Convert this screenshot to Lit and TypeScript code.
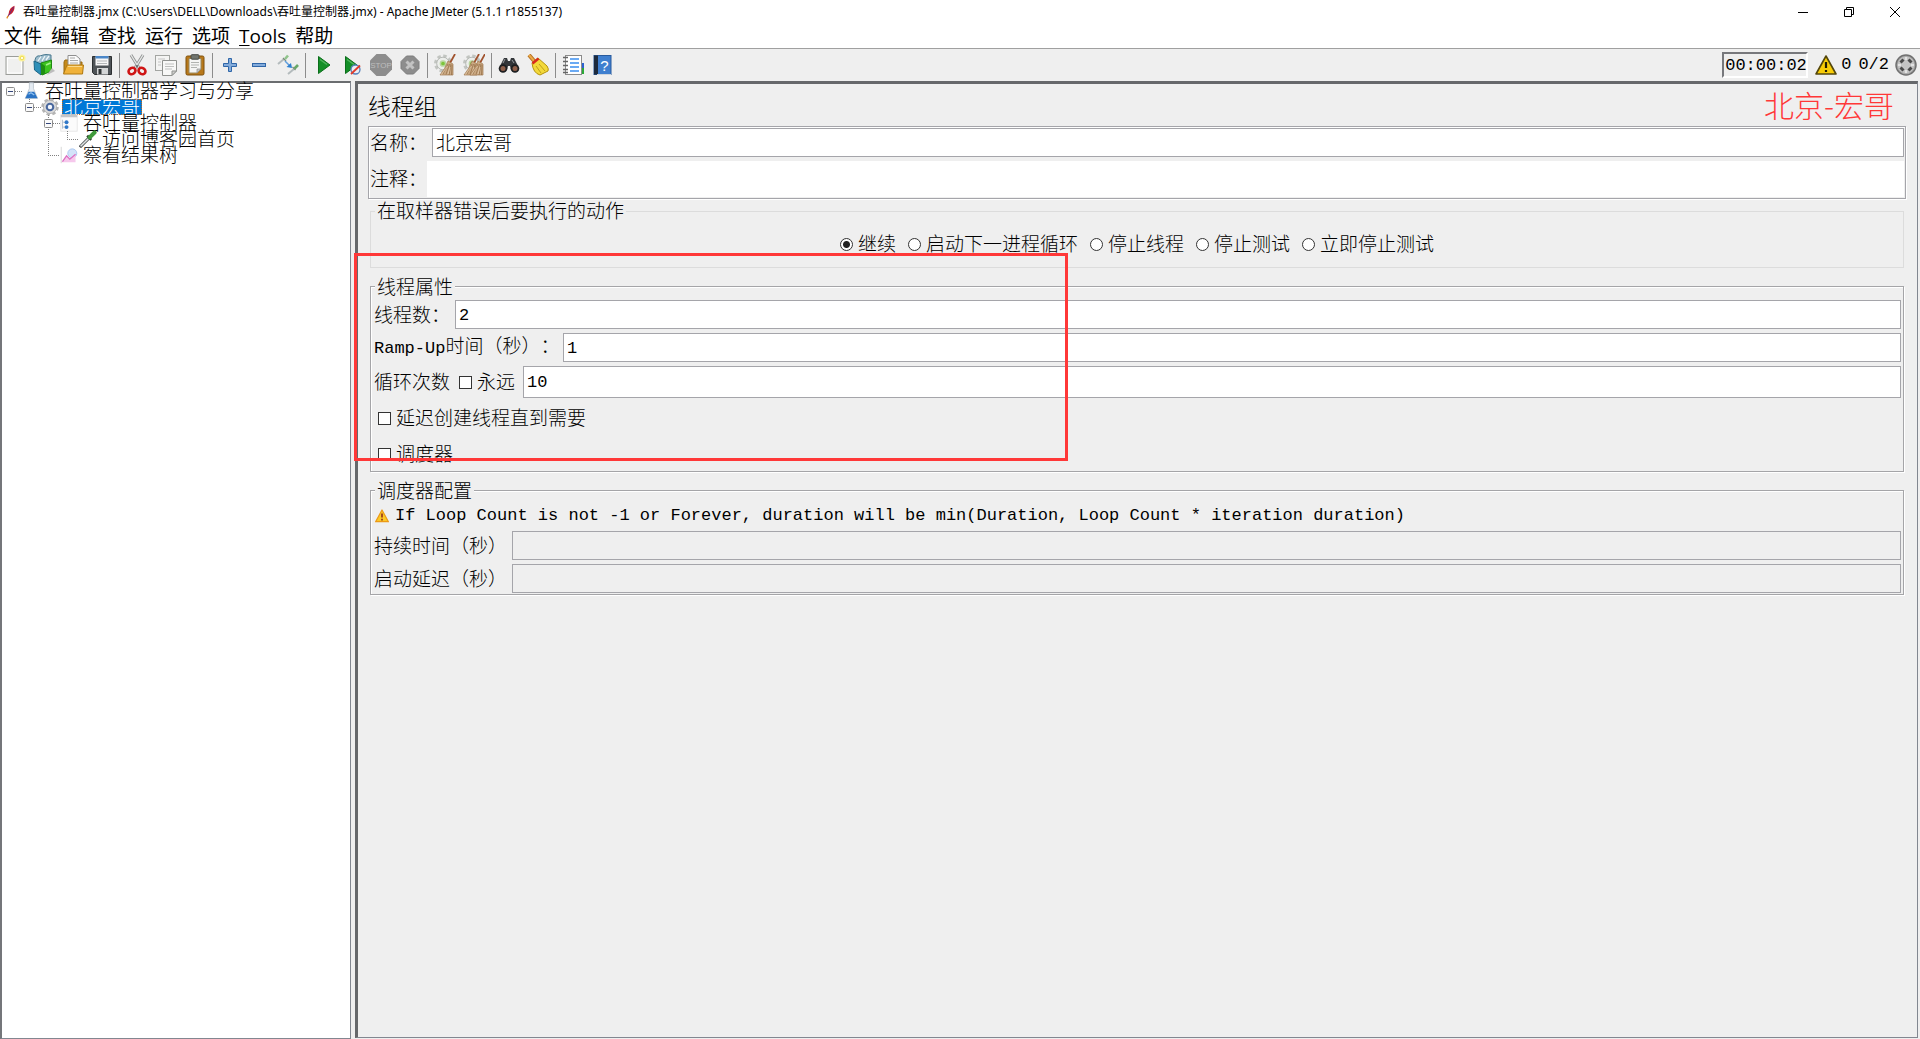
import { LitElement, html, svg, css, nothing } from "lit";
import type { TemplateResult } from "lit";
import { customElement } from "lit/decorators.js";
import { classMap } from "lit/directives/class-map.js";

const gear = svg`
  <circle cx="9" cy="9.500" r="7.500" fill="none" stroke="#c2c5c1" stroke-width="3" stroke-dasharray="3.400 2.490"/>
  <circle cx="9" cy="9.500" r="6.300" fill="#eceeeb" stroke="#b6b9b5"/>
  <circle cx="9" cy="9.500" r="2.600" fill="#7cc53a" stroke="#b9d79e" stroke-width="1.500"/>`;

const broom = (x: number) => svg`
  <g transform="translate(${x} 0)">
    <path d="M15 9 20 0" stroke="#a0522d" stroke-width="1.800"/>
    <path d="M13 7 18 10 18 21 5 21Q10 15 13 7Z" fill="#cba983" stroke="#a07a50" stroke-width=".700"/>
    <path d="M13 10 8 20M14.500 10 11 20.500M16 10 14 21M17 11 16.500 21" stroke="#8f6a42" stroke-width=".700"/>
    <path d="M12.500 12 6.500 20.500M15 13 13 20" stroke="#e7d0b2" stroke-width=".700"/>
  </g>`;

const icons: Record<string, TemplateResult> = {
  new: svg`
    <rect x="2" y="2.500" width="17" height="18" fill="#f0f0ef" stroke="#9c9e9a"/>
    <rect x="3.500" y="4" width="14" height="15" fill="none" stroke="#fff"/>
    <circle cx="18" cy="4" r="3.600" fill="#fbf3a0"/><circle cx="18" cy="4" r="1.800" fill="#fffbe0" stroke="#eedb4c"/>`,
  templates: svg`
    <path d="M2 6Q3 1 7 2L10 1Q12 0 18 1L18 8 3 10Z" fill="#9dbccc" stroke="#48788f"/>
    <path d="M5 7 8 2.500M9 7 12 2M13 6 16 2" stroke="#eef6f9" stroke-width="1.300"/>
    <path d="M1 7 8 10 8 21 1.500 16Z" fill="#2e8fb8" stroke="#1b6587"/>
    <path d="M8 9 18.500 6 18.500 17 9 21Z" fill="#3cc41f" stroke="#1e8a10"/>
    <path d="M8 9 12 12 12 20 8 21Z" fill="#1f8f12"/><path d="M13 11 17.500 9" stroke="#a5f08c" stroke-width="1.500"/>
    <path d="M19 14 22 17 14 21Z" fill="#bdbdbd"/>`,
  open: svg`
    <path d="M2 8 3 6 7 6 8 8 20 8 20 19 2 19Z" fill="#c58a1a" stroke="#9a6b10"/>
    <path d="M6 1.500 14 1.500 18 5 18 13 6 13Z" fill="#fafafa" stroke="#8f8f8f"/>
    <path d="M8 4 13 4M8 6.500 16 6.500M8 9 16 9" stroke="#a8a8a8"/>
    <path d="M5 11 21.500 11 20.500 20 1.500 20Z" fill="#f0b23a" stroke="#b07a12"/>
    <path d="M6 12.500 20 12.500" stroke="#fbd98c"/>`,
  save: svg`
    <path d="M1.500 2.500 20.500 2.500 20.500 20.500 3.500 20.500 1.500 18.500Z" fill="#4e5357" stroke="#2c2f31"/>
    <rect x="4.500" y="2.500" width="13" height="9" fill="#f6f6f6"/><rect x="4.500" y="2" width="13" height="2.500" fill="#4b87c8"/>
    <path d="M6 7 16 7M6 9.500 16 9.500" stroke="#b4b7b9"/>
    <rect x="6" y="14" width="11" height="6.500" fill="#d4d6d7"/><rect x="7.500" y="15" width="3" height="5" fill="#303436"/>`,
  cut: svg`
    <path d="M5 1 13 14M17 1 9 14" stroke="#8e9090" stroke-width="3"/>
    <path d="M5 1 13 14M17 1 9 14" stroke="#e5e7e6" stroke-width="1.400"/>
    <ellipse cx="6" cy="17" rx="3.600" ry="3" fill="none" stroke="#cf1515" stroke-width="2.600" transform="rotate(-30 6 17)"/>
    <ellipse cx="16" cy="17" rx="3.600" ry="3" fill="none" stroke="#cf1515" stroke-width="2.600" transform="rotate(30 16 17)"/>
    <circle cx="11" cy="12" r="1" fill="#555"/>`,
  copy: svg`
    <rect x=".500" y="1.500" width="14" height="15" fill="#f4f4f3" stroke="#a3a5a2"/>
    <path d="M3 5 10 5M3 8 6 8M3 11 6 11" stroke="#c4c4c4"/>
    <path d="M7.500 6.500 21.500 6.500 21.500 17 17 21.500 7.500 21.500Z" fill="#f8f8f7" stroke="#90928f"/>
    <path d="M10 10 19 10M10 12.500 19 12.500M10 15 17 15" stroke="#bfc0bf"/>
    <path d="M21.500 17 17 17 17 21.500Z" fill="#cfcfcd" stroke="#90928f"/>`,
  paste: svg`
    <rect x="2" y="2" width="18" height="19" rx="1.500" fill="#b8781a" stroke="#7e500c"/>
    <path d="M5 4.500 17 4.500 17 15 13 19 5 19Z" fill="#f5f5f4" stroke="#98885e"/>
    <rect x="7" y=".700" width="8" height="4.500" rx="1" fill="#72766f" stroke="#484b46"/>
    <path d="M7 8.500 15 8.500M7 11 15 11M7 13.500 13 13.500" stroke="#b1b3b0"/>
    <path d="M17 15 13 15 13 19Z" fill="#c7c8c6" stroke="#8f8f8f" stroke-width=".700"/>`,
  plus: svg`<path d="M9.500 4.500H12.500V9.500H17.500V12.500H12.500V17.500H9.500V12.500H4.500V9.500H9.500Z" fill="#83abdb" stroke="#2f66a8"/>`,
  minus: svg`<rect x="4.500" y="9.500" width="13" height="3" fill="#83abdb" stroke="#2f66a8"/>`,
  toggle: svg`
    <path d="M1 10 7 5" stroke="#b4bbbd" stroke-width="2"/><path d="M6 4 9 7" stroke="#7b8a7b" stroke-width="1.300"/><path d="M8 5 11 1.500" stroke="#8fc48b" stroke-width="2.600"/>
    <path d="M8 7 13 12" stroke="#5f9ede" stroke-width="1.500"/><path d="M14 9 15 14 9.500 13Z" fill="#2e7fd0"/>
    <path d="M11 20 17 15" stroke="#b4bbbd" stroke-width="2"/><path d="M15.500 13 18.500 16" stroke="#7b8a7b" stroke-width="1.300"/><path d="M17.500 14.500 21 11" stroke="#69a869" stroke-width="2.600"/>`,
  start: svg`<path d="M6.500 2.500 18 11 6.500 19.500Z" fill="#138f27" stroke="#0b6e1a"/><path d="M8 5.500 15 10.500" stroke="#4fb35c" stroke-width="1.500"/>`,
  startNoPause: svg`
    <path d="M4.500 2.500 16 11 4.500 19.500Z" fill="#138f27" stroke="#0b6e1a"/><path d="M6 5.500 13 10.500" stroke="#4fb35c" stroke-width="1.500"/>
    <circle cx="14.500" cy="15.500" r="4.500" fill="#e9eef5" stroke="#5580bb" stroke-width="1.300"/><path d="M10 20 19 11.500" stroke="#e03a2a" stroke-width="1.800"/>`,
  stop: svg`
    <path d="M6.500 0H15.500L22 6.500V15.500L15.500 22H6.500L0 15.500V6.500Z" fill="#8d8d8d"/>
    <text x="11" y="14" text-anchor="middle" font-family="Liberation Sans" font-size="8" fill="#bdbdbd">STOP</text>`,
  shutdown: svg`
    <path d="M7.500 2H14.500L20 7.500V14.500L14.500 20H7.500L2 14.500V7.500Z" fill="#8d8d8d" stroke="#7e7e7e"/>
    <path d="M7.500 7.500 14.500 14.500M14.500 7.500 7.500 14.500" stroke="#c3c3c3" stroke-width="3"/>`,
  clear: svg`${gear}${broom(1)}`,
  clearAll: svg`${gear}${broom(-4)}${broom(2)}`,
  search: svg`
    <path d="M2 12 6 4H9L10 7H12L13 4H16L20 12V16H13L12 12H10L9 16H2Z" fill="#33363a"/>
    <circle cx="5" cy="14.500" r="4.300" fill="#1d1f21"/><circle cx="17" cy="14.500" r="4.300" fill="#1d1f21"/>
    <circle cx="5" cy="14.500" r="2.500" fill="#8e5f4a"/><circle cx="17" cy="14.500" r="2.500" fill="#8e5f4a"/>
    <path d="M5 9 7 5M14 6 16 9" stroke="#999da1"/>`,
  resetSearch: svg`
    <path d="M2 1 8 8" stroke="#b3701f" stroke-width="4"/><path d="M2 1 8 8" stroke="#eca948" stroke-width="2"/>
    <path d="M5 9 11 4 20 12Q22 15 21 17L13 21Q6 19 5 9Z" fill="#f3d93a" stroke="#b5920d"/>
    <path d="M5.500 9.500 11.500 4.500" stroke="#d82a1d" stroke-width="2.500"/>
    <path d="M9 12 14 19M12 10 18 17" stroke="#c0a01a"/>`,
  functions: svg`
    <rect x="18" y="14" width="4" height="6" fill="#2aa836"/><rect x="18" y="9" width="4" height="5" fill="#2b62d0"/>
    <rect x="3.500" y="1.500" width="16" height="19" fill="#fff" stroke="#8b8b8b"/>
    <path d="M8 5H17M8 9H17M8 13H17M8 17H17" stroke="#3b8ff0" stroke-width="1.500"/>
    <path d="M1 3.500H6M1 7.500H6M1 11.500H6M1 15.500H6M1 18.500H6" stroke="#666" stroke-width="1.300"/>`,
  help: svg`
    <rect x="3" y="1.500" width="17" height="19" fill="#3f7fcf" stroke="#285a9c"/><rect x="3" y="1.500" width="4" height="19" fill="#1d2a3c"/>
    <path d="M6 20.500H20" stroke="#cfd5dc"/>
    <text x="13.500" y="16.500" text-anchor="middle" font-family="Liberation Sans" font-size="15" fill="#fff">?</text>`,
  threads: svg`
    <circle cx="11" cy="11" r="10" fill="#a9a9a9" stroke="#707070" stroke-width="1.500"/>
    <circle cx="11" cy="11" r="8.200" fill="#c4c4c4"/>
    <g stroke="#4a4a4a" stroke-width="3"><path d="M8.500 5.500 5.500 8.500M13.500 5.500 16.500 8.500M8.500 16.500 5.500 13.500M13.500 16.500 16.500 13.500"/></g>
    <path d="M11 3V6M11 16V19M3 11H6M16 11H19" stroke="#ececec" stroke-width="1.500"/>`,
  warning: svg`
    <path d="M11 2 21 20H1Z" fill="#f8cc06" stroke="#54470c" stroke-width="1.600" stroke-linejoin="round"/>
    <path d="M11 8V14M11 16V18" stroke="#231d02" stroke-width="2.200"/>`,
  caution: svg`
    <path d="M11 1.500 21 20H1Z" fill="#fbc926" stroke="#ec9a16" stroke-width="2" stroke-linejoin="round"/>
    <path d="M11 7V13.500M11 15.500V18" stroke="#a3461d" stroke-width="3"/>`,
  flask: svg`
    <path d="M9 1H14V8L19 20H4L9 8Z" fill="#e4ebf2" stroke="#b9c3cc"/>
    <path d="M8 12H15L19 20H4Z" fill="#2a73c4"/><path d="M8 15 11 13 15 16" stroke="#8fc0f0" stroke-width="1.500" fill="none"/>`,
  group: svg`
    <circle cx="11" cy="11" r="9.200" fill="none" stroke="#b4b4b4" stroke-width="3" stroke-dasharray="4.200 3.020"/>
    <circle cx="11" cy="11" r="8" fill="#dcdcdc" stroke="#a9a9a9"/>
    <circle cx="11" cy="11" r="4" fill="#f4f7fc" stroke="#4a689e" stroke-width="2.600"/>`,
  controller: svg`
    <rect x="1" y="1" width="20" height="20" fill="#fbfbfb" stroke="#e2e2e2"/><rect x="1" y="1" width="20" height="3" fill="#c3c5c9"/>
    <path d="M3 7V18M3 10H6M3 16H6" stroke="#a8b8c8"/>
    <circle cx="8" cy="10" r="2.400" fill="#2f78c8"/><circle cx="8" cy="16" r="2.400" fill="#2f78c8"/>`,
  sampler: svg`
    <path d="M1 21 12 10" stroke="#5c6062" stroke-width="4"/><path d="M2 20 12 10" stroke="#dfe4e4" stroke-width="1.700"/>
    <path d="M10 7 15 12" stroke="#2c3a2c" stroke-width="3"/><path d="M13 9 19 3" stroke="#3f9a3c" stroke-width="5" stroke-linecap="round"/>`,
  results: svg`
    <path d="M1.500 1V21" stroke="#d0d0d0"/>
    <circle cx="15" cy="9" r="5.500" fill="#d3e3f9" stroke="#a3c2ec"/>
    <path d="M2 20 8 12 12 16 19 10 19 20Z" fill="#f6c8ec"/><path d="M3 19 8 12 12 16 19 10" fill="none" stroke="#dc70c2" stroke-width="1.500"/>`,
  app: svg`
    <path d="M7 20 9 13Q10 4 18 1Q19 9 13 14L9 16Z" fill="#c8202e"/><path d="M8 18 17 3" stroke="#6d2a7c" stroke-width="1.500"/>
    <path d="M6 21 8 17" stroke="#e08a1e" stroke-width="2"/>`,
};

const icon = (name: string, size: number) =>
  html`<svg class="icon" width=${size} height=${size} viewBox="0 0 22 22" fill="none" aria-hidden="true">${icons[name]}</svg>`;

const toolGroups: [string, string][][] = [
  [["new", "新建"], ["templates", "模板"], ["open", "打开"], ["save", "保存"]],
  [["cut", "剪切"], ["copy", "复制"], ["paste", "粘贴"]],
  [["plus", "全部展开"], ["minus", "全部折叠"], ["toggle", "切换"]],
  [["start", "启动"], ["startNoPause", "不停顿开始"], ["stop", "停止"], ["shutdown", "关闭"]],
  [["clear", "清除"], ["clearAll", "清除全部"]],
  [["search", "查找"], ["resetSearch", "重置搜索"]],
  [["functions", "函数助手"], ["help", "帮助"]],
];

interface Node {
  label: string;
  icon: string;
  depth: number;
  selected?: boolean;
  box?: number;
  lines: string;
}

/* "lines" holds the dotted connectors of a row, "box" the centre of its expander. */
const nodes: Node[] = [
  { label: "吞吐量控制器学习与分享", icon: "flask", depth: 0, box: 8, lines: "M13 8.5H20" },
  { label: "北京宏哥", icon: "group", depth: 1, selected: true, box: 27, lines: "M27.5 0V4M32 8.5H39" },
  { label: "吞吐量控制器", icon: "controller", depth: 2, box: 46, lines: "M46.5 0V16M51 8.5H58" },
  { label: "访问博客园首页", icon: "sampler", depth: 3, lines: "M46.5 0V16M65.5 0V8M65 8.5H77" },
  { label: "察看结果树", icon: "results", depth: 2, lines: "M46.5 0V8M46 8.5H58" },
];

@customElement("app-root")
export class AppRoot extends LitElement {
  static styles = css`
    :host {
      display: block;
      color: #000;
      font: 300 19px/20px "Noto Sans CJK SC", "Liberation Sans", sans-serif;
      text-spacing-trim: space-all;
    }
    * { box-sizing: border-box; }
    button, input { font: inherit; color: inherit; }
    button { border: 0; padding: 0; background: none; display: flex; align-items: center; justify-content: center; }
    .icon { display: block; flex: none; }
    .window { height: 100vh; display: grid; grid-template-rows: 23px 26px 32px 1fr; background: #efefef; position: relative; }

    .title { display: flex; align-items: center; background: #fff; padding: 0 2px 0 3px; }
    .title h1 { margin: 0; padding-left: 6px; flex: 1; font: 400 12px/22px "Noto Sans", "Noto Sans CJK SC", sans-serif; }
    .title button { width: 46px; height: 20px; }

    .menu { display: flex; gap: 9px; padding: 1px 0 0 4px; background: #fff; border-bottom: 1px solid #a0a0a0; font: 400 19px/24px "Open Sans", "Noto Sans CJK SC", sans-serif; }
    .menu u { text-underline-offset: 2px; text-decoration-thickness: 1px; }

    .tools { display: flex; align-items: center; }
    .tools button { width: 29px; height: 28px; }
    .sep { width: 1px; height: 25px; margin: 0 2px 0 3px; background: #8c8c8c; }
    .mono { font: 400 17px/20px "Liberation Mono", monospace; }
    .status { margin-left: auto; display: flex; align-items: center; padding-right: 3px; }
    .clock { padding: 1px 0 0 1px; height: 26px; width: 86px; line-height: 22px; border: 2px solid; border-color: #77787c #fff #fff #77787c; }
    .status .alerts { width: auto; gap: 4px; margin: 0 7px 0 7px; }
    .status .threads { width: 22px; margin-left: 6px; }

    .main { display: grid; grid-template-columns: 351px 1fr; column-gap: 4px; min-height: 0; padding-right: 2px; }
    .tree { margin: 0; padding: 0; list-style: none; background: #fff; border: 1px solid #828790; border-width: 2px 1px 1px 2px; border-color: #6b6d70 #828790 #828790 #74767a; }
    .row { display: flex; height: 16px; align-items: center; white-space: nowrap; }
    .label { margin-left: 3px; padding: 0 2px; line-height: 14px; height: 16px; }
    .label.selected { background: #0078d7; color: #fff; outline: 1px dotted #c06a20; outline-offset: -1px; }

    .panel { border: solid #66686b; border-width: 3px 1px 1px 3px; border-right-color: #828790; border-bottom-color: #828790; margin-bottom: 1px; padding: 0 11px 0 10px; min-width: 0; }
    .heading { display: flex; align-items: center; justify-content: space-between; height: 42px; padding-right: 12px; }
    .heading h2 { margin: 0; font-size: 23px; line-height: 28px; font-weight: 300; }
    .stamp { font-size: 30px; line-height: 32px; color: #ff3838; padding-bottom: 2px; }

    .identity { border: 1px solid #a5a5aa; padding: 1px; background: #efefef; box-shadow: inset 1px 1px #fff, 1px 1px #fff; }
    .field { display: flex; align-items: center; min-height: 29px; }
    .field label { flex: none; }
    .field label, .choice { padding-bottom: 2px; }
    .field input[type="text"] { flex: 1; min-width: 0; align-self: stretch; border: 1px solid #a5a5aa; border-radius: 0; background: #fff; padding: 0 3px 2px; margin: 0; outline: none; }
    .field input.mono { padding: 2px 3px 0; }
    .field input:disabled { background: #efefef; }
    .identity label { width: 57px; }
    .identity input[type="text"].name { margin-left: 5px; }
    .identity input[type="text"].comment { border: 0; }
    .remarks { min-height: 36px; margin-top: 4px; }

    fieldset { border: 1px solid #a5a5a8; box-shadow: inset 1px 1px #fff, 1px 1px #fff; margin: 8px 2px 0 2px; padding: 4px 2px 1px 3px; display: grid; gap: 4px; min-width: 0; }
    legend { padding: 0 2px; margin-left: 1px; line-height: 20px; background: #efefef; }
    .errors { border-color: #dcdcdc; box-shadow: none; margin-top: 2px; padding: 13px 0; }
    .errors legend { margin-left: 4px; padding-bottom: 2px; line-height: 18px; }
    .choices { display: flex; justify-content: center; gap: 12px; line-height: 18px; }
    .choice { display: flex; align-items: center; gap: 5px; }
    .properties .check { padding-left: 4px; min-height: 32px; }
    .tall { min-height: 32px; }
    .colon { width: 81px; }
    .ramp { width: 189px; }
    .loops { width: 85px; }
    .forever { width: 64px; }
    .seconds { width: 138px; }
    .notice { display: flex; align-items: center; gap: 6px; height: 23px; padding-left: 1px; }

    .mark { appearance: none; width: 13px; height: 13px; margin: 2px 0 0; border: 1px solid #333; background: #fff; flex: none; }
    .mark[type="radio"] { border-radius: 50%; }
    .mark[type="radio"]:checked { background: radial-gradient(circle, #222 0 3px, #fff 4px); }

    .frame { position: absolute; left: 354px; top: 253px; width: 714px; height: 208px; border: 3px solid #ff3838; pointer-events: none; }
  `;

  private treeRow(node: Node) {
    const width = 20 + node.depth * 19;
    return html`<li class="row" role="treeitem" aria-level=${node.depth + 1} aria-selected=${node.selected ? "true" : "false"}>
      <svg class="icon" width=${width} height="16" fill="none" aria-hidden="true">
        <path d=${node.lines} stroke="#808080" stroke-dasharray="1 1" />
        ${node.box === undefined
          ? nothing
          : svg`<rect x=${node.box - 3.5} y="4.5" width="8" height="8" rx="1" fill="#fafafa" stroke="#8c8c8c"/>
              <path d="M${node.box - 2} 8.5h5" stroke="#34477c"/>`}
      </svg>
      ${icon(node.icon, 18)}
      <span class=${classMap({ label: true, selected: !!node.selected })}>${node.label}</span>
    </li>`;
  }

  render() {
    return html`<div class="window">
      <header class="title">
        ${icon("app", 14)}
        <h1>吞吐量控制器.jmx (C:\\Users\\DELL\\Downloads\\吞吐量控制器.jmx) - Apache JMeter (5.1.1 r1855137)</h1>
        <button aria-label="最小化"><svg width="12" height="12"><path d="M1 6.5H11" stroke="#000" /></svg></button>
        <button aria-label="还原"><svg width="12" height="12" fill="none" stroke="#000"><path d="M1.5 3.500H8.500V10.500H1.500ZM3.500 3V1.500H10.500V8.500H9" /></svg></button>
        <button aria-label="关闭"><svg width="12" height="12"><path d="M1 1 11 11M11 1 1 11" stroke="#000" /></svg></button>
      </header>
      <nav class="menu">
        ${["文件", "编辑", "查找", "运行", "选项"].map((m) => html`<button>${m}</button>`)}
        <button><span><u>T</u>ools</span></button>
        <button>帮助</button>
      </nav>
      <div class="tools" role="toolbar">
        ${toolGroups.map(
          (group, i) => html`${i ? html`<span class="sep"></span>` : nothing}
          ${group.map(([name, label]) => html`<button aria-label=${label}>${icon(name, 22)}</button>`)}`
        )}
        <div class="status mono">
          <span class="clock">00:00:02</span>
          <button class="alerts" aria-label="警告">${icon("warning", 22)}<span>0</span></button>
          <span>0/2</span>
          <button class="threads" aria-label="线程">${icon("threads", 22)}</button>
        </div>
      </div>
      <div class="main">
        <ul class="tree" role="tree">${nodes.map((n) => this.treeRow(n))}</ul>
        <main class="panel">
          <div class="heading"><h2>线程组</h2><span class="stamp">北京-宏哥</span></div>
          <div class="identity">
            <div class="field"><label for="name">名称：</label><input class="name" id="name" type="text" .value=${"北京宏哥"} /></div>
            <div class="field remarks"><label for="comment">注释：</label><input class="comment" id="comment" type="text" /></div>
          </div>
          <fieldset class="errors">
            <legend>在取样器错误后要执行的动作</legend>
            <div class="choices">
              ${["继续", "启动下一进程循环", "停止线程", "停止测试", "立即停止测试"].map(
                (c, i) => html`<label class="choice"><input class="mark" type="radio" name="action" ?checked=${i === 0} />${c}</label>`
              )}
            </div>
          </fieldset>
          <fieldset class="properties">
            <legend>线程属性</legend>
            <div class="field"><label class="colon" for="threads">线程数：</label><input class="mono" id="threads" type="text" .value=${"2"} /></div>
            <div class="field"><label class="ramp" for="ramp"><span class="mono">Ramp-Up</span>时间（秒）：</label><input class="mono" id="ramp" type="text" .value=${"1"} /></div>
            <div class="field tall">
              <label class="loops" for="loops">循环次数</label>
              <label class="choice forever"><input class="mark" type="checkbox" />永远</label>
              <input class="mono" id="loops" type="text" .value=${"10"} />
            </div>
            <label class="choice check"><input class="mark" type="checkbox" />延迟创建线程直到需要</label>
            <label class="choice check"><input class="mark" type="checkbox" />调度器</label>
          </fieldset>
          <fieldset>
            <legend>调度器配置</legend>
            <div class="notice">${icon("caution", 14)}<span class="mono">If Loop Count is not -1 or Forever, duration will be min(Duration, Loop Count * iteration duration)</span></div>
            <div class="field"><label class="seconds" for="duration">持续时间（秒）</label><input id="duration" type="text" disabled /></div>
            <div class="field"><label class="seconds" for="delay">启动延迟（秒）</label><input id="delay" type="text" disabled /></div>
          </fieldset>
        </main>
      </div>
      <div class="frame"></div>
    </div>`;
  }
}
